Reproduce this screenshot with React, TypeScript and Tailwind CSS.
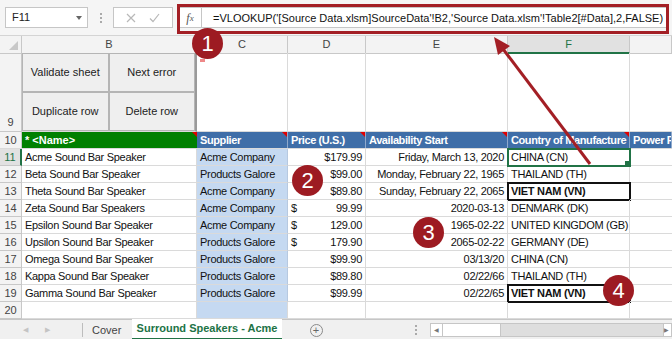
import React from 'react';

// ─── Datos ────────────────────────────────────────────────────────────────────

type Row = {
  n: number;
  name: string;
  supplier: string;
  price: string;
  acct?: boolean;
  date: string;
  country: string;
  boxed?: boolean;
};

const ROWS: Row[] = [
  { n: 11, name: 'Acme Sound Bar Speaker', supplier: 'Acme Company', price: '$179.99', date: 'Friday, March 13, 2020', country: 'CHINA (CN)' },
  { n: 12, name: 'Beta Sound Bar Speaker', supplier: 'Products Galore', price: '$99.00', date: 'Monday, February 22, 1965', country: 'THAILAND (TH)' },
  { n: 13, name: 'Theta Sound Bar Speaker', supplier: 'Acme Company', price: '$89.80', date: 'Sunday, February 22, 2065', country: 'VIET NAM (VN)', boxed: true },
  { n: 14, name: 'Zeta Sound Bar Speakers', supplier: 'Acme Company', price: '99.99', acct: true, date: '2020-03-13', country: 'DENMARK (DK)' },
  { n: 15, name: 'Epsilon Sound Bar Speaker', supplier: 'Acme Company', price: '129.00', acct: true, date: '1965-02-22', country: 'UNITED KINGDOM (GB)' },
  { n: 16, name: 'Upsilon Sound Bar Speaker', supplier: 'Products Galore', price: '179.90', acct: true, date: '2065-02-22', country: 'GERMANY (DE)' },
  { n: 17, name: 'Omega Sound Bar Speaker', supplier: 'Products Galore', price: '$99.90', date: '03/13/20', country: 'CHINA (CN)' },
  { n: 18, name: 'Kappa Sound Bar Speaker', supplier: 'Products Galore', price: '$89.80', date: '02/22/66', country: 'THAILAND (TH)' },
  { n: 19, name: 'Gamma Sound Bar Speaker', supplier: 'Products Galore', price: '$99.99', date: '02/22/65', country: 'VIET NAM (VN)', boxed: true },
];

const GRID = 'grid grid-cols-[22px_175px_91px_78px_142px_122px_1fr]';
const CELL = 'h-[17px] border-r border-b border-[#dadada] px-[3px] text-[11px] tracking-[-0.3px] leading-[16px] whitespace-nowrap overflow-hidden text-[#111]';

// ─── Piezas ───────────────────────────────────────────────────────────────────

function RedTick() {
  return <span className="absolute top-0 right-0 w-0 h-0 border-t-[5px] border-l-[5px] border-t-[#e00000] border-l-transparent" />;
}

function Badge({ n, className }: { n: number; className: string }) {
  return (
    <div className={`absolute w-[31px] h-[31px] rounded-full bg-[#9d1b22] text-white text-[22px] leading-[31px] text-center ${className}`}>
      {n}
    </div>
  );
}

function Dots() {
  return (
    <div className="flex flex-col items-center gap-[2px]">
      <span className="w-[2px] h-[2px] bg-[#aaa]" />
      <span className="w-[2px] h-[2px] bg-[#aaa]" />
      <span className="w-[2px] h-[2px] bg-[#aaa]" />
    </div>
  );
}

function FormulaBar() {
  return (
    <div className="h-[36px] bg-[#f5f5f5] flex items-center px-[5px] border-b border-[#d4d4d4]">
      <div className="w-[83px] h-[21px] bg-white border border-[#c6c6c6] flex items-center justify-between pl-[6px] pr-[5px] text-[11px] text-[#222]">
        F11
        <span className="w-0 h-0 border-l-[3px] border-r-[3px] border-t-[4px] border-l-transparent border-r-transparent border-t-[#666]" />
      </div>
      <div className="w-[25px] flex justify-center">
        <Dots />
      </div>
      <div className="w-[60px] h-[21px] bg-white border border-[#c6c6c6] flex items-center justify-around px-[6px] text-[#b8b8b8]">
        <svg width="10" height="10" viewBox="0 0 10 10" stroke="currentColor" strokeWidth="1.2"><path d="M1 1l8 8M9 1l-8 8" /></svg>
        <svg width="11" height="10" viewBox="0 0 11 10" stroke="currentColor" strokeWidth="1.2" fill="none"><path d="M1 5.5l3 3 6-7.5" /></svg>
      </div>
      <div className="ml-[5px] w-[24px] h-[21px] bg-white border border-[#c6c6c6] flex items-center justify-center text-[12px] italic text-[#555] font-['Liberation_Serif',serif]">
        f<span className="text-[9px] mt-[3px]">x</span>
      </div>
      <div className="flex-1 h-[21px] bg-white border border-[#c6c6c6] border-l-0 pl-[11px] text-[11px] leading-[20px] text-[#111] whitespace-nowrap overflow-hidden">
        =VLOOKUP('[Source Data.xlsm]SourceData'!B2,'Source Data.xlsm'!Table2[#Data],2,FALSE)
      </div>
    </div>
  );
}

function ColumnHeaders() {
  const cols = ['B', 'C', 'D', 'E', 'F', ''];
  return (
    <div className={`${GRID} h-[17px] bg-[#f3f3f3]`}>
      <div className="relative border-r border-b border-[#c8c8c8]">
        <span className="absolute right-[3px] bottom-[3px] w-0 h-0 border-b-[9px] border-l-[9px] border-b-[#c8c8c8] border-l-transparent" />
      </div>
      {cols.map((c, i) => (
        <div
          key={i}
          className={
            c === 'F'
              ? 'bg-[#e1e1e1] border-r border-[#c8c8c8] border-b-2 border-b-[#217346] text-center text-[11px] leading-[16px] text-[#217346]'
              : 'border-r border-b border-[#c8c8c8] text-center text-[11px] leading-[16px] text-[#444]'
          }
        >
          {c}
        </div>
      ))}
    </div>
  );
}

function Btn({ label }: { label: string }) {
  return (
    <div className="bg-[#efefef] border border-[#b5b5b5] flex items-center justify-center text-[11px] text-[#222]">
      {label}
    </div>
  );
}

function ButtonsRow() {
  return (
    <div className={`${GRID} h-[79px]`}>
      <div className="bg-[#f3f3f3] border-r border-b border-[#c8c8c8] flex items-end justify-center pb-[1px] text-[11px] text-[#444]">9</div>
      <div className="grid grid-cols-2 grid-rows-2 border-r-2 border-[#9a9a9a] border-b border-b-[#dadada]">
        <Btn label="Validate sheet" />
        <Btn label="Next error" />
        <Btn label="Duplicate row" />
        <Btn label="Delete row" />
      </div>
      <div className="relative border-r border-b border-[#dadada]">
        <span className="absolute left-[3px] top-[6px] w-[5px] h-[3px] bg-[#e88]" />
      </div>
      <div className="border-r border-b border-[#dadada]" />
      <div className="border-r border-b border-[#dadada]" />
      <div className="border-r border-b border-[#dadada]" />
      <div className="border-b border-[#dadada]" />
    </div>
  );
}

function HeaderRow() {
  const blue = 'relative h-[16px] bg-[#3f6ea8] border-r border-[#8fa9cc] px-[3px] text-[11px] tracking-[-0.4px] leading-[16px] font-bold text-white whitespace-nowrap overflow-hidden';
  return (
    <div className={`${GRID} border-b border-[#dadada]`}>
      <div className="h-[16px] bg-[#f3f3f3] border-r border-[#c8c8c8] text-center text-[11px] leading-[16px] text-[#444]">10</div>
      <div className="relative h-[16px] bg-[#008000] px-[3px] text-[11px] leading-[16px] font-bold text-white">
        * &lt;Name&gt;
        <RedTick />
      </div>
      <div className={blue}>Supplier<RedTick /></div>
      <div className={blue}>Price (U.S.)<RedTick /></div>
      <div className={blue}>Availability Start<RedTick /></div>
      <div className={blue}>Country of Manufacture<RedTick /></div>
      <div className={blue}>Power Rating</div>
    </div>
  );
}

function DataRow({ r }: { r: Row }) {
  const active = r.n === 11;
  return (
    <div className={GRID}>
      <div
        className={
          active
            ? 'h-[17px] bg-[#e1e1e1] border-b border-[#c8c8c8] border-r-2 border-r-[#217346] text-center text-[11px] leading-[16px] text-[#217346]'
            : 'h-[17px] bg-[#f3f3f3] border-r border-b border-[#c8c8c8] text-center text-[11px] leading-[16px] text-[#444]'
        }
      >
        {r.n}
      </div>
      <div className={CELL}>{r.name}</div>
      <div className={`${CELL} bg-[#c5d9f1] border-r-[#b7c9e0]`}>{r.supplier}</div>
      {r.acct ? (
        <div className={`${CELL} flex justify-between`}>
          <span>$</span>
          <span>{r.price}</span>
        </div>
      ) : (
        <div className={`${CELL} text-right`}>{r.price}</div>
      )}
      <div className={`${CELL} text-right`}>{r.date}</div>
      <div
        className={
          active
            ? `${CELL} relative outline-2 outline-[#217346] -outline-offset-1`
            : r.boxed
              ? `${CELL} font-bold outline-2 outline-[#111] -outline-offset-1`
              : CELL
        }
      >
        {r.country}
        {active && <span className="absolute right-0 bottom-0 w-[4px] h-[4px] bg-[#217346]" />}
      </div>
      <div className="h-[17px] border-b border-[#dadada]" />
    </div>
  );
}

function EmptyRow() {
  return (
    <div className={GRID}>
      <div className="h-[17px] bg-[#f3f3f3] border-r border-b border-[#c8c8c8] text-center text-[11px] leading-[16px] text-[#444]">20</div>
      <div className={CELL} />
      <div className={`${CELL} bg-[#c5d9f1]`} />
      <div className={CELL} />
      <div className={CELL} />
      <div className={CELL} />
      <div className="h-[17px] border-b border-[#dadada]" />
    </div>
  );
}

function TabBar() {
  return (
    <div className="h-[21px] bg-[#f0f0f0] border-t border-[#c6c6c6] flex items-stretch text-[11px]">
      <div className="w-[82px] flex items-center gap-[17px] pl-[23px] text-[#c4c4c4] text-[7px]">
        <span>◀</span>
        <span>▶</span>
      </div>
      <div className="w-px my-[3px] bg-[#bdbdbd]" />
      <div className="w-[49px] flex items-center pl-[9px] text-[#444]">Cover</div>
      <div className="w-[150px] -mt-px bg-white border-b-2 border-[#217346] flex items-center justify-center font-bold text-[#217346]">
        Surround Speakers - Acme
      </div>
      <div className="w-[68px] flex items-center justify-center">
        <span className="w-[13px] h-[13px] rounded-full border border-[#8a8a8a] text-[#666] text-[11px] leading-[11px] text-center">+</span>
      </div>
      <div className="w-[80px] flex items-center justify-end pr-[13px]">
        <Dots />
      </div>
      <div className="flex-1 flex items-center my-[3px] bg-[#dedede] border border-[#c6c6c6]">
        <span className="w-[12px] h-full bg-white border-r border-[#c6c6c6] text-[6px] leading-[13px] text-center text-[#777]">◀</span>
        <span className="w-[58px] h-full bg-white border-r border-[#c6c6c6]" />
        <span className="flex-1" />
        <span className="w-[8px] h-full bg-white border-l border-[#c6c6c6] text-[6px] leading-[13px] text-[#777]">▶</span>
      </div>
    </div>
  );
}

// ─── App ──────────────────────────────────────────────────────────────────────

export default function App() {
  return (
    <div className="relative w-[672px] h-[339px] overflow-hidden bg-white font-['Liberation_Sans',Arial,sans-serif]">
      <FormulaBar />
      <ColumnHeaders />
      <ButtonsRow />
      <HeaderRow />
      {ROWS.map(r => <DataRow key={r.n} r={r} />)}
      <EmptyRow />
      <TabBar />

      {/* Anotaciones */}
      <div className="absolute left-[177px] top-[4px] w-[492px] h-[30px] border-[3px] border-[#a31f25]" />
      <svg className="absolute left-0 top-0 pointer-events-none" width="672" height="339">
        <line x1="590" y1="164" x2="500" y2="45" stroke="#a31f25" strokeWidth="3" />
        <polygon points="494,37 510,46 498,55" fill="#a31f25" />
      </svg>
      <Badge n={1} className="left-[192px] top-[28px]" />
      <Badge n={2} className="left-[292px] top-[165px]" />
      <Badge n={3} className="left-[413px] top-[217px]" />
      <Badge n={4} className="left-[603px] top-[275px]" />
    </div>
  );
}
